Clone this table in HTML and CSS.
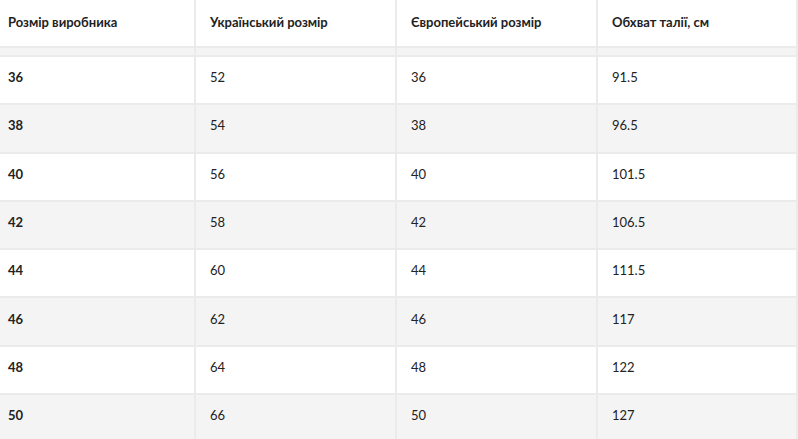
FILE: index.html
```html
<!DOCTYPE html>
<html lang="uk">
<head>
<meta charset="utf-8">
<link rel="stylesheet" href="styles.css">
</head>
<body>
<table class="sizes">
  <thead>
    <tr class="head">
      <th>Розмір виробника</th>
      <th>Український розмір</th>
      <th>Європейський розмір</th>
      <th>Обхват талії, см</th>
    </tr>
    <tr class="gap"><td></td><td></td><td></td><td></td></tr>
  </thead>
  <tbody>
    <tr><td class="b">36</td><td>52</td><td>36</td><td>91.5</td></tr>
    <tr><td class="b">38</td><td>54</td><td>38</td><td>96.5</td></tr>
    <tr><td class="b">40</td><td>56</td><td>40</td><td>101.5</td></tr>
    <tr><td class="b">42</td><td>58</td><td>42</td><td>106.5</td></tr>
    <tr><td class="b">44</td><td>60</td><td>44</td><td>111.5</td></tr>
    <tr><td class="b">46</td><td>62</td><td>46</td><td>117</td></tr>
    <tr><td class="b">48</td><td>64</td><td>48</td><td>122</td></tr>
    <tr><td class="b">50</td><td>66</td><td>50</td><td>127</td></tr>
  </tbody>
</table>
</body>
</html>
```

FILE: styles.css
```css
html, body {
  margin: 0;
  padding: 0;
  background: #ffffff;
}
body {
  font-family: "Lato", "Noto Sans", sans-serif;
  font-size: 13px;
  line-height: 16px;
  color: #222222;
  overflow: hidden;
}
.sizes {
  border-collapse: collapse;
  table-layout: fixed;
  width: 798px;
}
.sizes th,
.sizes td {
  box-sizing: border-box;
  border: 2px solid #ebebeb;
  text-align: left;
  vertical-align: middle;
  padding: 0 0 0 14px;
}
.sizes th:first-child,
.sizes td:first-child {
  width: 195px;
  padding-left: 8px;
  border-left: none;
}
.sizes th:nth-child(2),
.sizes td:nth-child(2) { width: 201px; }
.sizes th:nth-child(3),
.sizes td:nth-child(3) { width: 201px; }
.sizes .head th {
  height: 47px;
  border-top: none;
  font-weight: 700;
  padding-bottom: 3px;
}
.sizes .gap td {
  height: 9px;
  background: #f4f4f4;
}
.sizes tbody td {
  height: 48.3px;
  padding-bottom: 6px;
}
.sizes tbody tr:nth-child(even) td {
  background: #f4f4f4;
}
.sizes td.b {
  font-weight: 700;
}
```
